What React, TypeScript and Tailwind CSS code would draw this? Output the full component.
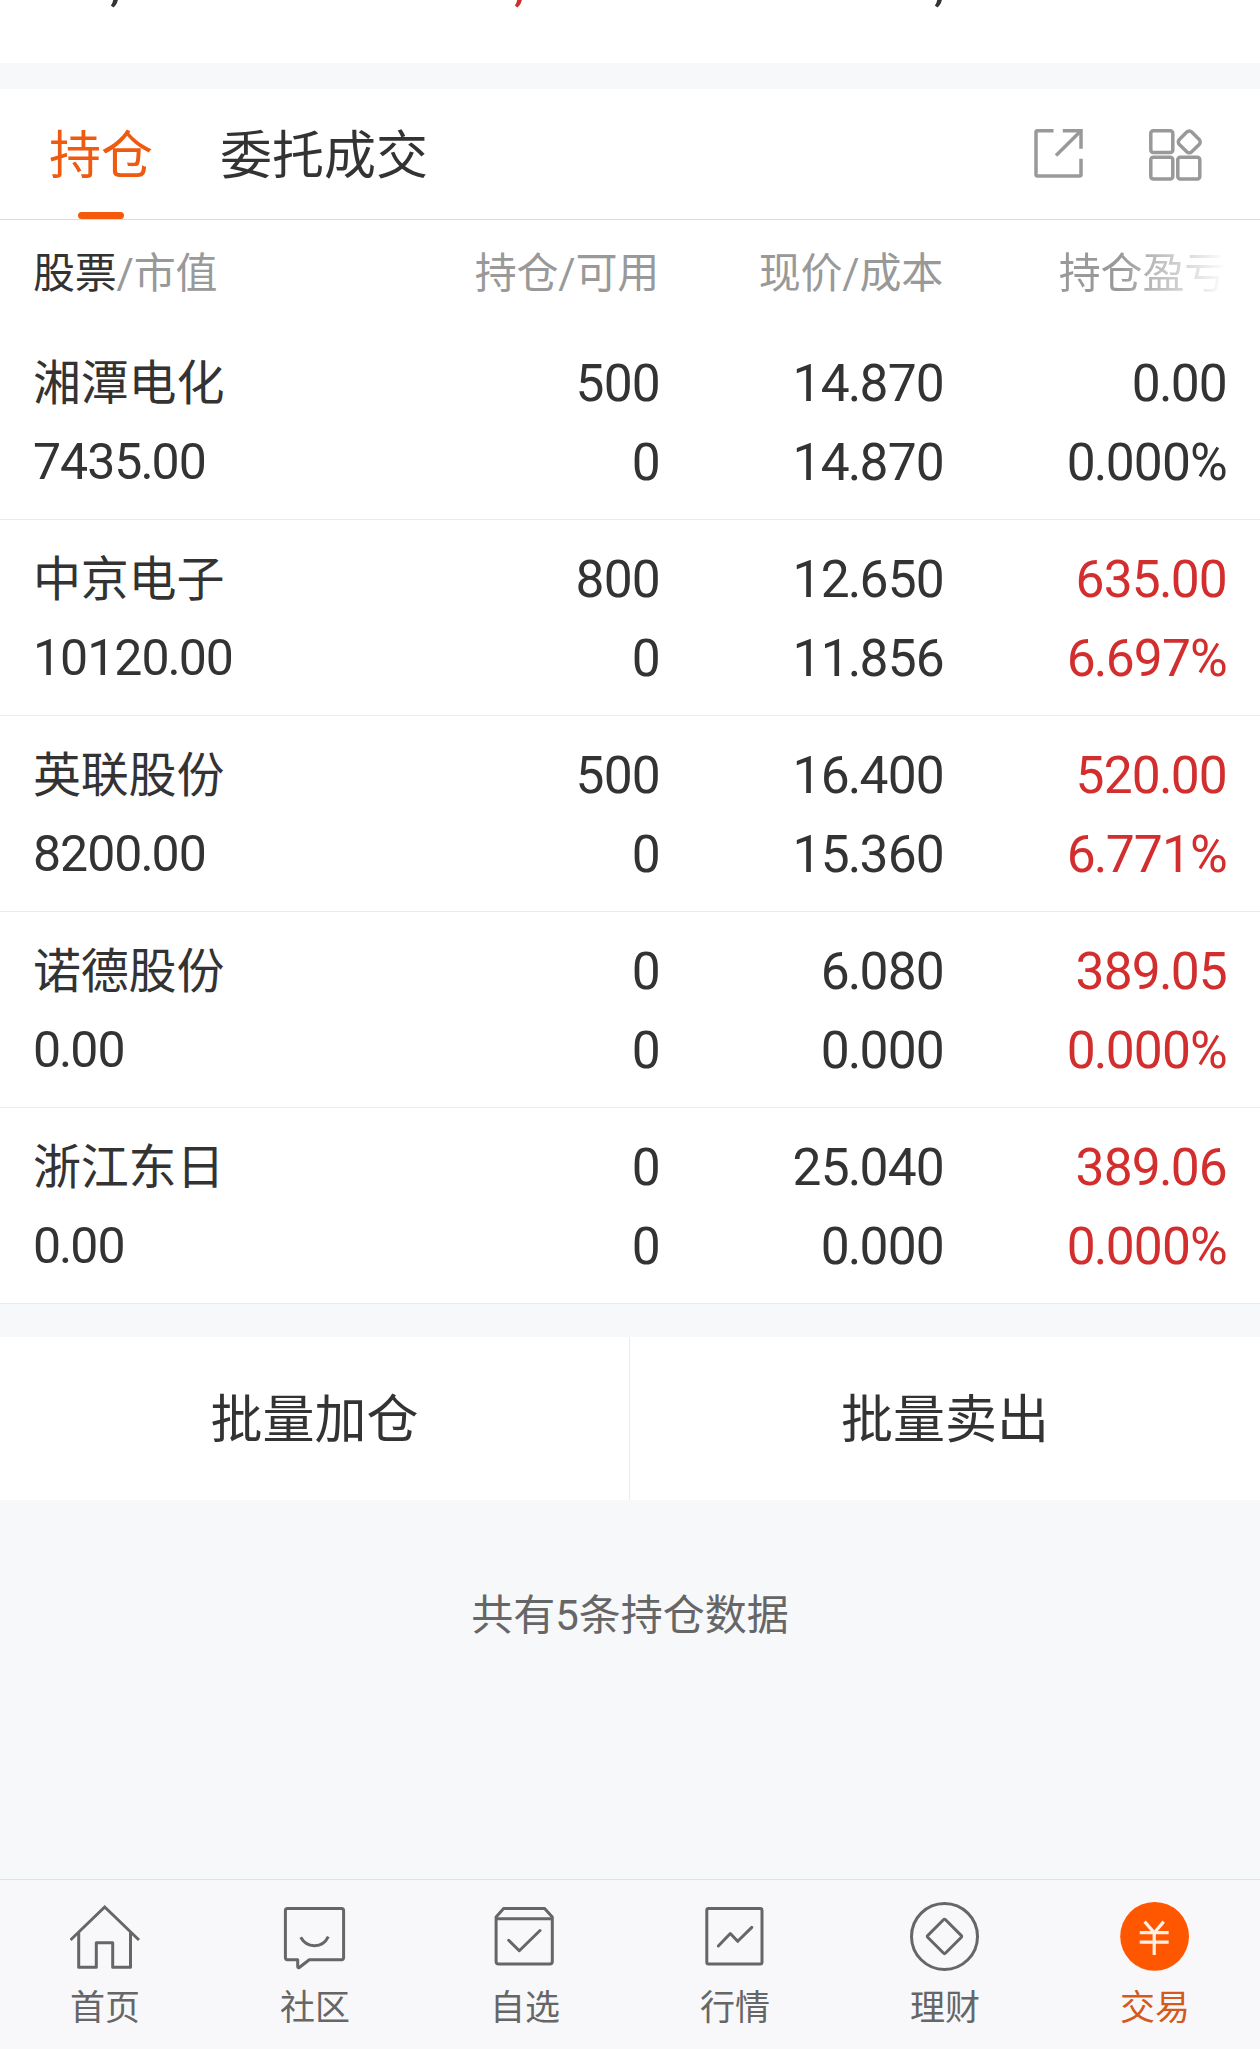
import { ReactNode, useState } from 'react';
import clsx from 'clsx';

interface Holding {
  name: string;
  marketValue: string;
  amount: string;
  available: string;
  price: string;
  cost: string;
  profit: string;
  profitRate: string;
  isUp: boolean;
}

interface NavItem {
  id: string;
  text: string;
  icon: ReactNode;
}

const holdings: Holding[] = [
  {
    name: '湘潭电化',
    marketValue: '7435.00',
    amount: '500',
    available: '0',
    price: '14.870',
    cost: '14.870',
    profit: '0.00',
    profitRate: '0.000%',
    isUp: false,
  },
  {
    name: '中京电子',
    marketValue: '10120.00',
    amount: '800',
    available: '0',
    price: '12.650',
    cost: '11.856',
    profit: '635.00',
    profitRate: '6.697%',
    isUp: true,
  },
  {
    name: '英联股份',
    marketValue: '8200.00',
    amount: '500',
    available: '0',
    price: '16.400',
    cost: '15.360',
    profit: '520.00',
    profitRate: '6.771%',
    isUp: true,
  },
  {
    name: '诺德股份',
    marketValue: '0.00',
    amount: '0',
    available: '0',
    price: '6.080',
    cost: '0.000',
    profit: '389.05',
    profitRate: '0.000%',
    isUp: true,
  },
  {
    name: '浙江东日',
    marketValue: '0.00',
    amount: '0',
    available: '0',
    price: '25.040',
    cost: '0.000',
    profit: '389.06',
    profitRate: '0.000%',
    isUp: true,
  },
];

const tabs = [
  { id: 'holdings', text: '持仓' },
  { id: 'orders', text: '委托成交' },
];

function NavIcon({ children }: { children: ReactNode }) {
  return (
    <svg
      viewBox="0 0 70 70"
      className="h-[70px] w-[70px]"
      fill="none"
      stroke="currentColor"
      strokeWidth="3"
    >
      {children}
    </svg>
  );
}

const navItems: NavItem[] = [
  {
    id: 'home',
    text: '首页',
    icon: (
      <NavIcon>
        <path d="M0.5 39L34.7 6L69 39" />
        <path
          d="M8.7 31.5V66.3H26.3V41.7H42.7V66.3H60.5V31.5"
          strokeLinejoin="round"
        />
      </NavIcon>
    ),
  },
  {
    id: 'community',
    text: '社区',
    icon: (
      <NavIcon>
        <path
          d="M7.5 7.6H61.5Q63.6 7.6 63.6 9.7V56.6Q63.6 58.7 61.5 58.7H29.3L19.6 66.3Q17.7 67.3 17.7 65.5V58.7H7.5Q5.4 58.7 5.4 56.6V9.7Q5.4 7.6 7.5 7.6Z"
          strokeLinejoin="round"
        />
        <path d="M20.7 36.3C27 47.6 42.5 47.6 48.3 35.6" />
      </NavIcon>
    ),
  },
  {
    id: 'watchlist',
    text: '自选',
    icon: (
      <NavIcon>
        <path
          d="M13.6 7.6H54.6L62.3 16V60.5Q62.3 63 59.8 63H8.6Q6.1 63 6.1 60.5V16Z"
          strokeLinejoin="round"
        />
        <path d="M6 17.7H62.3" />
        <path
          d="M18.7 39.3L29.3 49.7L50 29.5"
          strokeLinecap="round"
          strokeLinejoin="round"
        />
      </NavIcon>
    ),
  },
  {
    id: 'market',
    text: '行情',
    icon: (
      <NavIcon>
        <rect x="6.8" y="7.6" width="55.2" height="55.4" rx="1.8" />
        <path
          d="M18.3 45L30.3 32.5L37.7 40.3L51.8 26.4"
          strokeLinecap="round"
          strokeLinejoin="round"
        />
      </NavIcon>
    ),
  },
  {
    id: 'wealth',
    text: '理财',
    icon: (
      <NavIcon>
        <circle cx="34.5" cy="35.4" r="33" />
        <rect
          x="22"
          y="22.9"
          width="25"
          height="25"
          rx="1.5"
          transform="rotate(45 34.5 35.4)"
        />
      </NavIcon>
    ),
  },
  {
    id: 'trade',
    text: '交易',
    icon: (
      <NavIcon>
        <circle cx="34.6" cy="35.4" r="34.4" fill="#ff5600" stroke="none" />
        <g stroke="#fff0e6" strokeWidth="3.2">
          <path d="M24.6 20.6L34.3 31.7L43.7 20.6" />
          <path d="M19.7 31.7H48.7M19.7 41.1H48.7M34.2 31.7V54" />
        </g>
      </NavIcon>
    ),
  },
];

// The decimal point sits tighter than the digits around it
function Num({ value }: { value: string }) {
  const [whole, fraction] = value.split('.');
  return (
    <span>
      {whole}
      {fraction !== undefined && <span className="-mx-[1px]">.</span>}
      {fraction}
    </span>
  );
}

function SummaryTail() {
  return (
    <div className="h-[63px] overflow-hidden bg-white">
      <div className="-mt-[46px] grid h-[56px] grid-cols-[404px_420px_1fr] pl-[110px] text-[54px] leading-[56px]">
        <span>,</span>
        <span className="text-[#d22e2e]">,</span>
        <span>,</span>
      </div>
    </div>
  );
}

function Tabs() {
  const [active, setActive] = useState('holdings');

  return (
    <div className="flex h-[131px] items-stretch justify-between border-b border-[#dcdcdc] bg-white pr-[57px] pl-[49px]">
      <div className="flex gap-[67px]">
        {tabs.map((tab) => (
          <button
            key={tab.id}
            onClick={() => setActive(tab.id)}
            className={clsx(
              'flex flex-col items-center justify-between pt-[31px] text-[52px] leading-[74px]',
              active === tab.id ? 'text-[#ee5a10]' : 'text-[#333333]',
            )}
          >
            {tab.text}
            {active === tab.id && (
              <span className="h-[7px] w-[46px] rounded-full bg-[#f55a0c]" />
            )}
          </button>
        ))}
      </div>
      <div className="flex items-start gap-[64px] pt-[39px] text-[#999999]">
        <svg
          viewBox="0 0 50 50"
          className="h-[50px] w-[50px]"
          fill="none"
          stroke="currentColor"
          strokeWidth="3.5"
        >
          <path d="M19.5 2.8H3.5Q2 2.8 2 4.300V46.500Q2 48 3.500 48H45.500Q47 48 47 46.500V30.700" />
          <path d="M28.800 2.800H47V20.700" />
          <path d="M22 27.500L46.500 3.300" />
        </svg>
        <svg
          viewBox="0 0 55 54"
          className="h-[54px] w-[55px]"
          fill="none"
          stroke="currentColor"
          strokeWidth="3.5"
        >
          <rect x="2.800" y="2.800" width="22" height="21.700" rx="2.500" />
          <rect x="2.800" y="29.300" width="22" height="21.700" rx="2.500" />
          <rect x="29.800" y="29.300" width="22" height="21.700" rx="2.500" />
          <rect
            x="32.500"
            y="5.200"
            width="17.500"
            height="17.500"
            rx="3.500"
            transform="rotate(45 41.250 13.950)"
          />
        </svg>
      </div>
    </div>
  );
}

function TableHeader() {
  return (
    <div className="grid h-[104px] grid-cols-[1fr_250px_284px_283px] bg-white pr-[34px] pl-[33px] text-right text-[42px] leading-[108px] tracking-[-0.2px] text-[#999999]">
      <div className="text-left">
        <span className="text-[#333333]">股票</span>/市值
      </div>
      <div>持仓/可用</div>
      <div>现价/成本</div>
      <div className="bg-linear-to-r from-[#999999] from-[62%] to-white to-[100%] bg-clip-text text-transparent">
        持仓盈亏
      </div>
    </div>
  );
}

function HoldingRow({ item }: { item: Holding }) {
  return (
    <div className="grid h-[196px] grid-cols-[1fr_250px_284px_283px] border-b border-[#ebebeb] bg-white pt-[20px] pr-[33px] pl-[33px] text-right text-[51.5px] leading-[79px] tracking-[-0.8px]">
      <div className="text-left">
        <div className="text-[48px] tracking-[-0.2px]">{item.name}</div>
        <div className="text-[50px] tracking-[-1px]">
          <Num value={item.marketValue} />
        </div>
      </div>
      <div>
        <div>{item.amount}</div>
        <div>{item.available}</div>
      </div>
      <div>
        <div>
          <Num value={item.price} />
        </div>
        <div>
          <Num value={item.cost} />
        </div>
      </div>
      <div className={item.isUp ? 'text-[#d22e2e]' : ''}>
        <div>
          <Num value={item.profit} />
        </div>
        <div>
          <Num value={item.profitRate} />
        </div>
      </div>
    </div>
  );
}

function BottomNav() {
  const [current, setCurrent] = useState('trade');

  return (
    <nav className="grid h-[170px] grid-cols-6 border-t border-[#e1e2e4] bg-[#f8f8fa]">
      {navItems.map((item) => (
        <button
          key={item.id}
          onClick={() => setCurrent(item.id)}
          className={clsx(
            'flex flex-col items-center pt-[21px] text-[35px] leading-[50px]',
            current === item.id ? 'text-[#d4591a]' : 'text-[#666666]',
          )}
        >
          {item.icon}
          <span className="mt-[13px]">{item.text}</span>
        </button>
      ))}
    </nav>
  );
}

export default function App() {
  return (
    <div className="flex h-[2049px] w-[1260px] flex-col overflow-hidden bg-[#f7f8fa] font-[Roboto,'Noto_Sans_CJK_SC',sans-serif] text-[#333333]">
      <SummaryTail />
      <div className="mt-[26px]">
        <Tabs />
        <TableHeader />
        {holdings.map((item) => (
          <HoldingRow key={item.name} item={item} />
        ))}
      </div>
      <div className="mt-[33px] grid h-[163px] grid-cols-2 bg-white text-[52px]">
        <button className="border-r border-[#ebebeb] pt-[4px] leading-[159px]">
          批量加仓
        </button>
        <button className="pt-[4px] leading-[159px]">批量卖出</button>
      </div>
      <p className="flex-1 pt-[85px] text-center text-[42px] leading-[62px] text-[#666666]">
        共有5条持仓数据
      </p>
      <BottomNav />
    </div>
  );
}
